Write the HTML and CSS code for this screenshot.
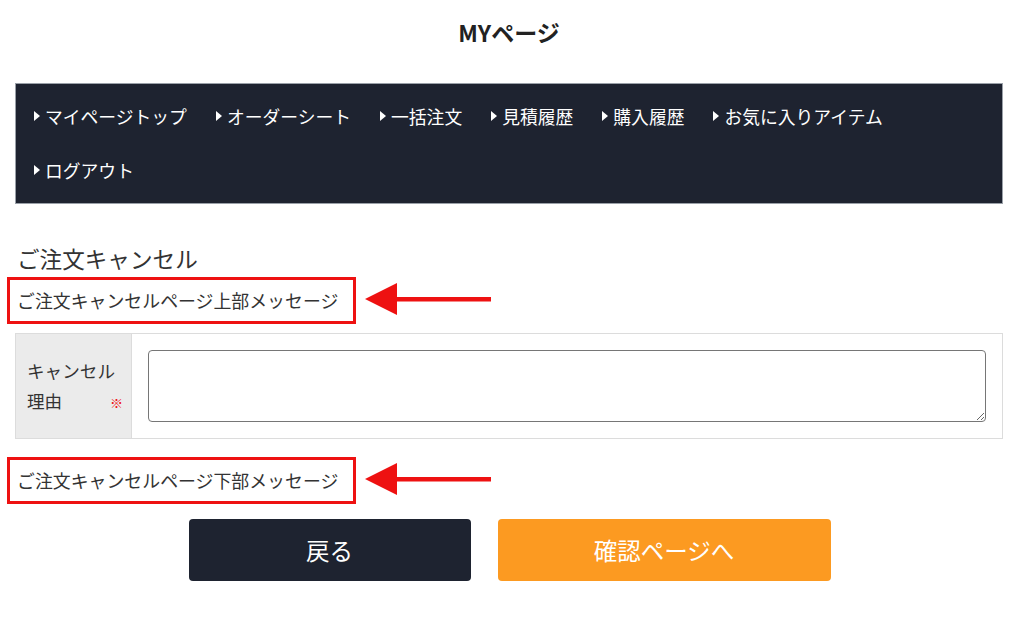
FILE: index.html
```html
<!DOCTYPE html>
<html lang="ja">
<head>
<meta charset="utf-8">
<title>ご注文キャンセル</title>
<link rel="stylesheet" href="styles.css">
</head>
<body>
<div class="page">
  <h1 class="page-title">MYページ</h1>
  <nav class="mynav">
    <a class="nav-item" href="#">マイページトップ</a>
    <a class="nav-item" href="#">オーダーシート</a>
    <a class="nav-item" href="#">一括注文</a>
    <a class="nav-item" href="#">見積履歴</a>
    <a class="nav-item" href="#">購入履歴</a>
    <a class="nav-item" href="#">お気に入りアイテム</a>
    <a class="nav-item" href="#">ログアウト</a>
  </nav>

  <h2 class="section-title">ご注文キャンセル</h2>

  <div class="note-row note-top">
    <div class="note-box">ご注文キャンセルページ上部メッセージ</div>
    <svg class="note-arrow" width="126" height="32" viewBox="0 0 126 32"><polygon points="0,16 32,0 32,32" fill="#ee1111"/><rect x="30" y="14" width="96" height="4.5" fill="#ee1111"/></svg>
  </div>

  <div class="form-table">
    <div class="form-label">
      <span class="label-line">キャンセル</span>
      <span class="label-line label-last">理由<span class="req">※</span></span>
    </div>
    <div class="form-field"><textarea class="reason"></textarea></div>
  </div>

  <div class="note-row note-bottom">
    <div class="note-box">ご注文キャンセルページ下部メッセージ</div>
    <svg class="note-arrow" width="126" height="32" viewBox="0 0 126 32"><polygon points="0,16 32,0 32,32" fill="#ee1111"/><rect x="30" y="14" width="96" height="4.5" fill="#ee1111"/></svg>
  </div>

  <div class="actions">
    <button class="btn btn-back">戻る</button>
    <button class="btn btn-next">確認ページへ</button>
  </div>
</div>
</body>
</html>
```

FILE: styles.css
```css
* { box-sizing: border-box; }
html, body {
  margin: 0;
  padding: 0;
  background: #fff;
}
body {
  font-family: "Noto Sans CJK JP", "Noto Sans", sans-serif;
  color: #333;
}
.page {
  width: 988px;
  margin-left: 15px;
}
.page-title {
  margin: 0;
  height: 64px;
  line-height: 64px;
  text-align: center;
  font-size: 23px;
  font-weight: 700;
  color: #222;
}
.mynav {
  margin-top: 19px;
  background: #1e2330;
  border: 1px solid #9aa0a8;
  padding: 5px 19px 6px 18px;
  display: flex;
  flex-wrap: wrap;
  column-gap: 29px;
}
.nav-item {
  display: flex;
  align-items: center;
  height: 54px;
  color: #fff;
  text-decoration: none;
  font-size: 17.8px;
  white-space: nowrap;
}
.nav-item::before {
  content: "";
  display: inline-block;
  width: 0;
  height: 0;
  border-top: 5px solid transparent;
  border-bottom: 5px solid transparent;
  border-left: 6px solid #fff;
  margin-right: 5px;
}
.section-title {
  margin: 38px 0 0 2px;
  height: 34px;
  line-height: 34px;
  font-size: 22.6px;
  font-weight: 400;
  color: #333;
}
.note-row {
  display: flex;
  align-items: center;
  margin-left: -8px;
}
.note-top { margin-top: 1px; }
.note-bottom { margin-top: 18px; }
.note-box {
  width: 349px;
  height: 47px;
  border: 3px solid #ee1111;
  padding-left: 7px;
  line-height: 41px;
  font-size: 17.9px;
  color: #333;
  white-space: nowrap;
}
.note-arrow {
  margin-left: 9px;
  margin-top: -4px;
}
.form-table {
  margin-top: 9px;
  display: flex;
  border: 1px solid #dcdcdc;
}
.form-label {
  width: 116px;
  flex: none;
  background: #ebebeb;
  border-right: 1px solid #dcdcdc;
  padding: 0 8px 0 11px;
  display: flex;
  flex-direction: column;
  justify-content: center;
}
.label-line {
  display: flex;
  align-items: center;
  font-size: 17.6px;
  line-height: 30px;
  white-space: nowrap;
}
.req {
  margin-left: auto;
  color: #ee1111;
  font-size: 13px;
  font-weight: 700;
  line-height: 1;
  padding-top: 3px;
}
.form-field {
  flex: 1;
  padding: 16px;
}
.reason {
  display: block;
  width: 100%;
  height: 72px;
  border: 1px solid #767676;
  border-radius: 4px;
  font-family: inherit;
  font-size: 16px;
  margin: 0;
}
.actions {
  margin-top: 15px;
  display: flex;
  justify-content: center;
  gap: 27px;
  padding-left: 1px;
}
.btn {
  height: 62px;
  border: none;
  border-radius: 4px;
  color: #fff;
  font-family: inherit;
  font-size: 23.5px;
  cursor: pointer;
}
.btn-back {
  width: 282px;
  background: #1e2330;
}
.btn-next {
  width: 333px;
  background: #fc9a21;
}
```
